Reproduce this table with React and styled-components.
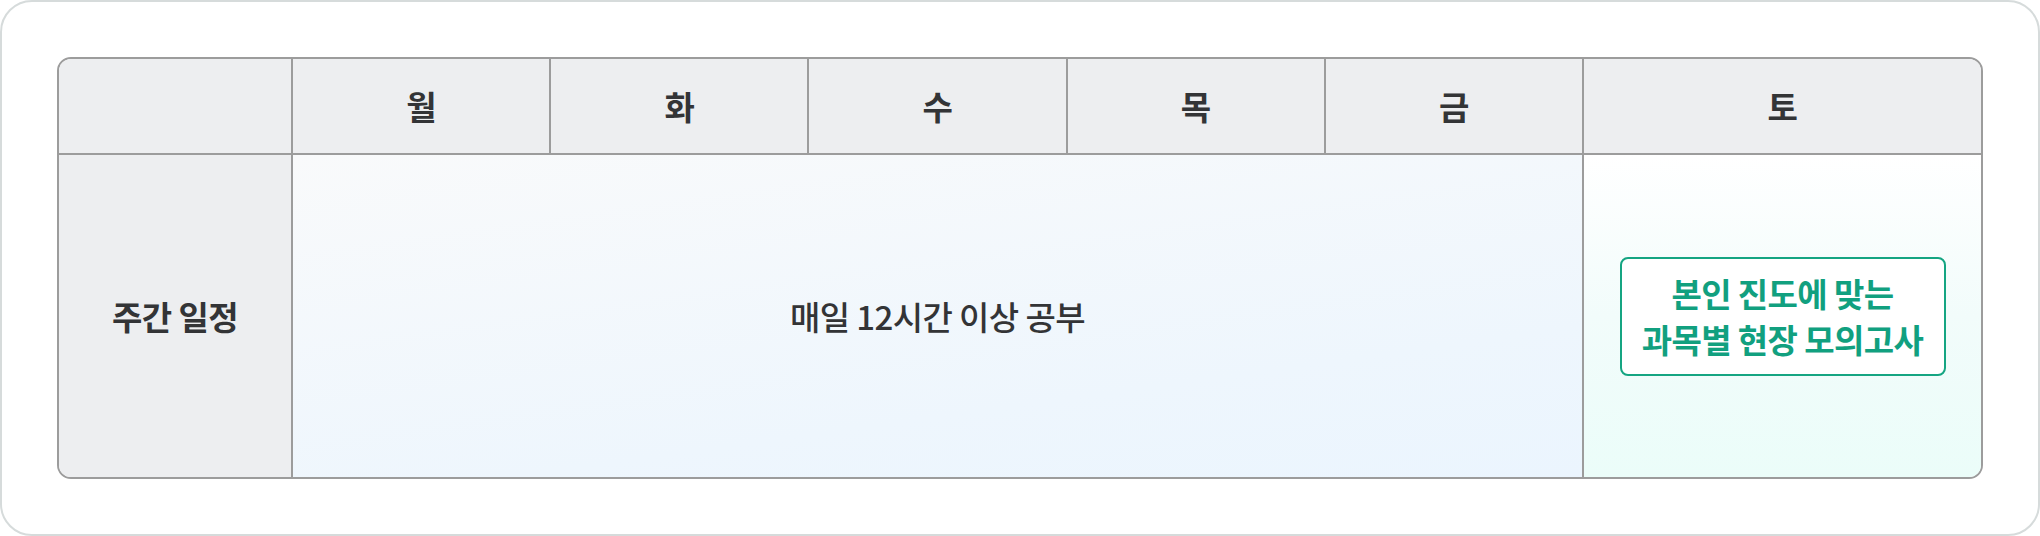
import React from "react";
import styled, { createGlobalStyle } from "styled-components";

const Global = createGlobalStyle`
  html, body { margin: 0; padding: 0; background: #ffffff; }
  body { font-family: "Noto Sans CJK KR", "Noto Sans", sans-serif; }
  * { box-sizing: border-box; }
`;

const Card = styled.div`
  width: 2040px;
  height: 536px;
  border: 2px solid #d6dbdb;
  border-radius: 32px;
  padding: 55px;
  background: #ffffff;
`;

const Table = styled.div`
  display: grid;
  grid-template-columns: 234px repeat(5, 1fr) 397px;
  grid-template-rows: 96px 1fr;
  height: 100%;
  border: 2px solid #9c9c9c;
  border-radius: 14px;
  overflow: hidden;
`;

const Cell = styled.div`
  display: flex;
  align-items: center;
  justify-content: center;
  border-right: ${(p) => (p.$last ? "none" : "2px solid #9c9c9c")};
  border-bottom: ${(p) => (p.$header ? "2px solid #9c9c9c" : "none")};
  background: ${(p) => p.$bg || "#edeef0"};
  color: #333436;
  font-size: 33px;
  font-weight: ${(p) => p.$weight || 600};
  letter-spacing: -0.6px;
  grid-column: ${(p) => p.$span || "auto"};
`;

const GreenBox = styled.div`
  width: 326px;
  height: 119px;
  border: 2px solid #15a582;
  border-radius: 8px;
  background: #ffffff;
  display: flex;
  flex-direction: column;
  align-items: center;
  justify-content: center;
  color: #11a07f;
  font-size: 33px;
  font-weight: 700;
  line-height: 46px;
  letter-spacing: -0.6px;
  text-align: center;
`;

const days = ["월", "화", "수", "목", "금"];

export default function App() {
  return (
    <>
      <Global />
      <Card>
        <Table>
          <Cell $header />
          {days.map((d) => (
            <Cell key={d} $header>
              {d}
            </Cell>
          ))}
          <Cell $header $last>
            토
          </Cell>
          <Cell $weight={700}>주간 일정</Cell>
          <Cell
            $span="span 5"
            $weight={500}
            $bg="linear-gradient(172deg, #f9fafb 0%, #eef6fd 70%, #ebf5fe 100%)"
          >
            매일 12시간 이상 공부
          </Cell>
          <Cell $last $bg="linear-gradient(180deg, #ffffff 0%, #f2fcfb 50%, #ebfdf9 100%)">
            <GreenBox>
              <span>본인 진도에 맞는</span>
              <span>과목별 현장 모의고사</span>
            </GreenBox>
          </Cell>
        </Table>
      </Card>
    </>
  );
}
